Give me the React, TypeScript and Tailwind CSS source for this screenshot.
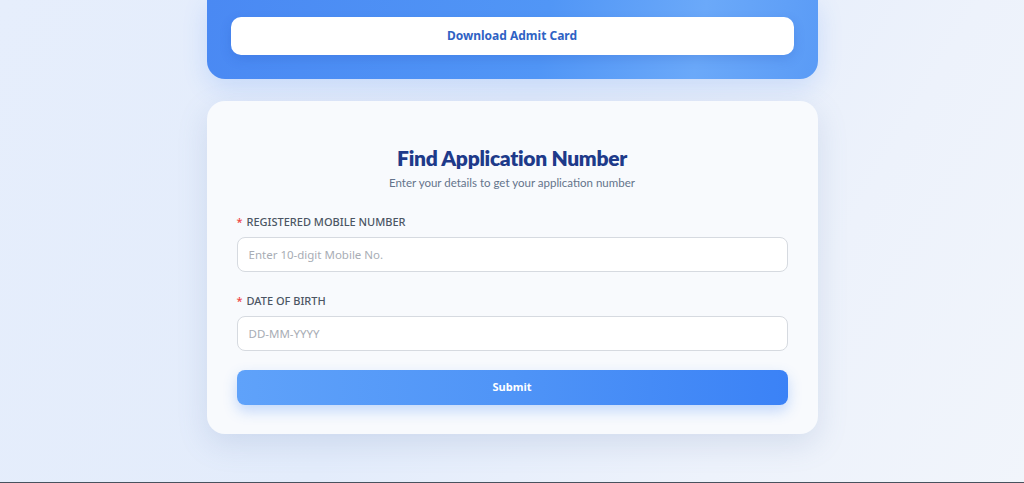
import React from "react";

export default function App() {
  return (
    <div className="min-h-[483px] w-full bg-[linear-gradient(120deg,#e6eefc_0%,#e3ecfb_45%,#edf2fb_75%,#f1f5fb_100%)] font-['Noto_Sans',sans-serif]">
      <div className="flex flex-col items-center h-[482px]">
        <div className="w-[611px] rounded-b-[18px] bg-[linear-gradient(100deg,#4a89f3_0%,#5196f6_55%,#6ba9f9_80%,#5a9bf6_100%)] px-6 pt-[17px] pb-6 shadow-[0_8px_24px_rgba(59,130,246,0.18)]">
          <button className="w-full h-[38px] rounded-[10px] bg-white text-[12px] font-bold text-[#2f62c4] font-['Noto_Sans',sans-serif] shadow-[0_4px_12px_rgba(30,64,175,0.18)]">
            Download Admit Card
          </button>
        </div>
        <div className="mt-[22px] w-[611px] rounded-[18px] bg-[#f8fafd] px-[30px] pt-[44px] pb-[29px] shadow-[0_10px_30px_rgba(100,130,180,0.18)]">
          <h2 className="text-center text-[21px] leading-[26px] font-extrabold tracking-[-0.3px] text-[#1e3a8a] font-['Lato',sans-serif]">
            Find Application Number
          </h2>
          <p className="mt-[5px] text-center text-[11.5px] leading-[14px] text-[#64748b] font-['Lato',sans-serif]">
            Enter your details to get your application number
          </p>
          <div className="mt-[25px]">
            <label className="block text-[11px] leading-[14px] font-medium text-[#4b5563]">
              <span className="text-[#ef4444] mr-[4px]">*</span>REGISTERED MOBILE NUMBER
            </label>
            <input
              className="mt-[8px] block w-full h-[35px] rounded-[8px] border border-[#d6dae0] bg-white px-[11px] text-[11.5px] text-[#374151] placeholder:text-[#a8adb5] outline-none"
              placeholder="Enter 10-digit Mobile No."
            />
          </div>
          <div className="mt-[22px]">
            <label className="block text-[11px] leading-[14px] font-medium text-[#4b5563]">
              <span className="text-[#ef4444] mr-[4px]">*</span>DATE OF BIRTH
            </label>
            <input
              className="mt-[8px] block w-full h-[35px] rounded-[8px] border border-[#d6dae0] bg-white px-[11px] text-[11.5px] text-[#374151] placeholder:text-[#a8adb5] outline-none"
              placeholder="DD-MM-YYYY"
            />
          </div>
          <button className="mt-[19px] w-full h-[35px] rounded-[8px] bg-[linear-gradient(90deg,#5fa2fa_0%,#4f94f7_50%,#3b82f6_100%)] text-[11px] font-bold text-white font-['Noto_Sans',sans-serif] shadow-[0_6px_14px_rgba(59,130,246,0.28)]">
            Submit
          </button>
        </div>
      </div>
      <div className="h-[12px] w-full bg-[#48525e]" />
    </div>
  );
}
